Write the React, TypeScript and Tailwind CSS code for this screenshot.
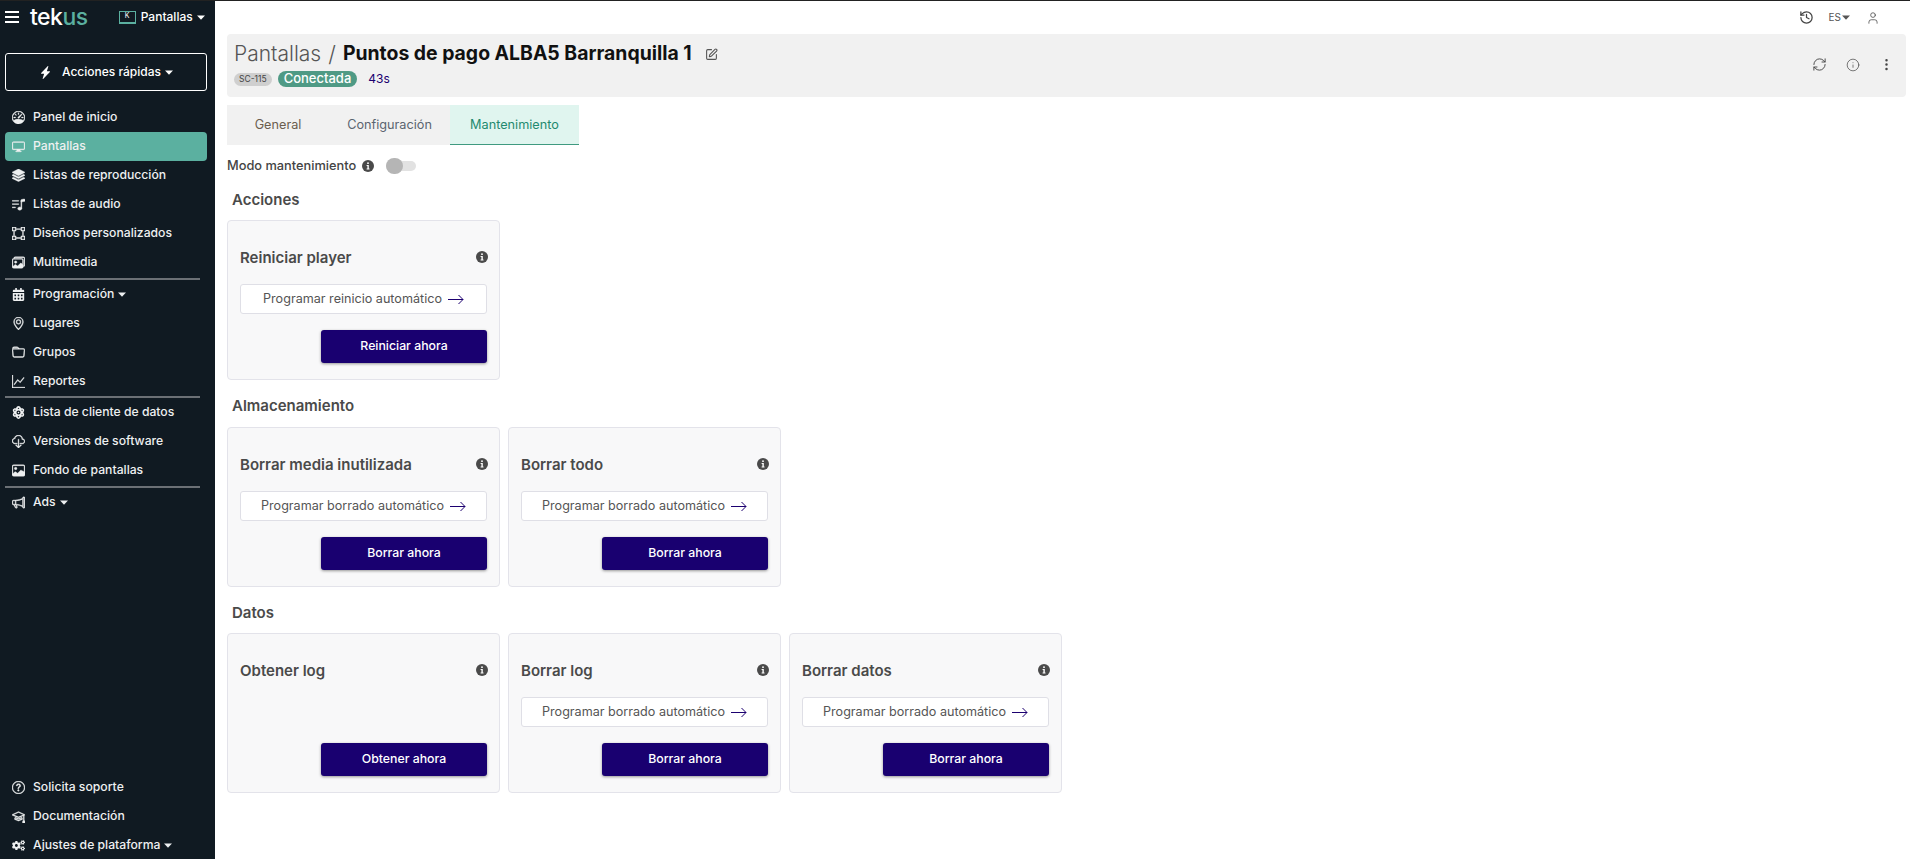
import React from "react";
import { SquarePen, RefreshCw, Info, EllipsisVertical, History, User } from "lucide-react";
import { BsSpeedometer, BsDisplay, BsStack, BsMusicNoteList, BsBoundingBox, BsImages, BsGeoAlt, BsFolder, BsGraphUp, BsCloudDownload, BsImage, BsMegaphone, BsQuestionCircle, BsMortarboard, BsLightningChargeFill } from "react-icons/bs";
import { FaCalendarAlt, FaAtom, FaCogs } from "react-icons/fa";

const font = "font-['Inter','Liberation_Sans',sans-serif]";

const Caret = ({ cls = "ml-1" }: { cls?: string }) => (
  <svg width="8" height="5" viewBox="0 0 8 5" className={cls}><path d="M0 0.5h8L4 4.8z" fill="currentColor" /></svg>
);

const SideItem = ({ icon: I, label, caret, active }: { icon: any; label: string; caret?: boolean; active?: boolean }) => (
  <div className={`flex h-[29px] items-center rounded-[4px] pl-[7px] text-[12.2px] font-medium text-[#eef0f1] ${active ? "bg-[#5bb0a0]" : ""}`}>
    <span className="mr-[8px] flex w-[13px] shrink-0 justify-center"><I size={13} stroke="currentColor" strokeWidth={0.5} /></span>
    <span>{label}</span>
    {caret && <Caret />}
  </div>
);

const Sep = () => <div className="mr-[7px] h-[2px] bg-[#6b7075]" />;

const InfoDot = ({ size = 12 }: { size?: number }) => (
  <svg width={size} height={size} viewBox="0 0 12 12" className="shrink-0">
    <circle cx="6" cy="6" r="6" fill="#4a4a4a" />
    <rect x="5.2" y="2.4" width="1.6" height="1.6" fill="#fff" />
    <path d="M4.6 5h2.2v3.4h.7v1H4.6v-1h.8V6h-.8z" fill="#fff" />
  </svg>
);

const Arrow = () => (
  <svg width="16" height="11" viewBox="0 0 16 11" className="ml-[6px]" fill="none" stroke="#1c0070" strokeWidth="1">
    <path d="M0 5.5h15M10.5 1l4.5 4.5L10.5 10" />
  </svg>
);

const Card = ({ title, link, action }: { title: string; link?: string; action: string }) => (
  <div className="flex h-[160px] w-[273px] flex-col rounded-[4px] border border-[#e3e3ea] bg-[#f8f8f9] px-[12px] pb-[16px]">
    <div className="mt-[25px] flex h-[24px] items-center justify-between">
      <span className="text-[15px] font-semibold text-[#4a4a4a]">{title}</span>
      <span className="-mr-[1px] -mt-[3px]"><InfoDot /></span>
    </div>
    {link && (
      <div className="mt-[14px] flex h-[30px] w-full items-center justify-center rounded-[3px] border border-[#dfdfe6] bg-white text-[12.6px] text-[#555]">
        <span>{link}</span>
        <Arrow />
      </div>
    )}
    <div className="mt-auto flex justify-end">
      <button className="h-[33px] w-[166px] rounded-[3px] bg-[#190070] text-[12.3px] font-medium text-white shadow-[0_1px_3px_rgba(0,0,0,0.4)]">{action}</button>
    </div>
  </div>
);

const SectionTitle = ({ children }: { children: React.ReactNode }) => (
  <div className="ml-[5px] flex h-[24px] items-center text-[15px] font-semibold text-[#4a4a4a]">{children}</div>
);

export default function App() {
  return (
    <div className={`${font} flex h-[859px] w-[1910px] overflow-hidden border-t border-[#222] bg-white`}>
      <aside className="flex h-full w-[215px] shrink-0 flex-col bg-[#101a22] pl-[5px] pr-[8px] text-white">
        <div className="flex h-[32px] items-center">
          <svg width="14" height="12" viewBox="0 0 14 12"><path d="M0 1h14M0 6h14M0 11h14" stroke="#fff" strokeWidth="2" /></svg>
          <span className="ml-[11px] text-[23px] leading-none font-medium tracking-[-0.5px]">tek<span className="text-[#5bb0a0]">us</span></span>
          <div className="ml-[31px] flex h-[13px] w-[17px] items-center justify-center border border-b-2 border-[#5bb0a0] text-[7px]">K</div>
          <span className="ml-[5px] text-[12px] font-medium">Pantallas</span>
          <Caret />
        </div>
        <div className="mt-[20px] flex h-[38px] items-center justify-center rounded-[3px] border border-white text-[12px] font-medium">
          <BsLightningChargeFill size={13} className="mr-[10px]" />
          Acciones rápidas
          <Caret />
        </div>
        <div className="mt-[12px] flex flex-col">
          <SideItem icon={BsSpeedometer} label="Panel de inicio" />
          <SideItem icon={BsDisplay} label="Pantallas" active />
          <SideItem icon={BsStack} label="Listas de reproducción" />
          <SideItem icon={BsMusicNoteList} label="Listas de audio" />
          <SideItem icon={BsBoundingBox} label="Diseños personalizados" />
          <SideItem icon={BsImages} label="Multimedia" />
          <div className="mt-[1px]"><Sep /></div>
          <SideItem icon={FaCalendarAlt} label="Programación" caret />
          <SideItem icon={BsGeoAlt} label="Lugares" />
          <SideItem icon={BsFolder} label="Grupos" />
          <SideItem icon={BsGraphUp} label="Reportes" />
          <Sep />
          <SideItem icon={FaAtom} label="Lista de cliente de datos" />
          <SideItem icon={BsCloudDownload} label="Versiones de software" />
          <SideItem icon={BsImage} label="Fondo de pantallas" />
          <div className="mt-[1px]"><Sep /></div>
          <SideItem icon={BsMegaphone} label="Ads" caret />
        </div>
        <div className="mt-auto -mb-[1px] flex flex-col">
          <SideItem icon={BsQuestionCircle} label="Solicita soporte" />
          <SideItem icon={BsMortarboard} label="Documentación" />
          <SideItem icon={FaCogs} label="Ajustes de plataforma" caret />
        </div>
      </aside>
      <main className="min-w-0 flex-1 pl-[12px] pr-[4px]">
        <div className="flex h-[33px] items-center justify-end pr-[26px] text-[#444]">
          <History size={15} />
          <span className="ml-[15px] flex items-center text-[10px] text-[#555]">ES<Caret cls="ml-[1px]" /></span>
          <User size={14} strokeWidth={1.3} className="ml-[16px]" />
        </div>
        <div className="flex h-[63px] items-start justify-between rounded-[4px] bg-[#f1f1f1] pl-[7px] pr-[12px]">
          <div>
            <div className="mt-[8px] flex h-[24px] items-center">
              <span className="text-[21px] font-light text-[#555]">Pantallas</span>
              <span className="mx-[7px] text-[22px] font-light text-[#555]">/</span>
              <span className="text-[19.4px] font-bold text-[#111]">Puntos de pago ALBA5 Barranquilla 1</span>
              <SquarePen size={13} className="ml-[13px] text-[#555]" />
            </div>
            <div className="mt-[4px] flex items-center">
              <span className="flex h-[13px] items-center rounded-full bg-[#cfcfcf] px-[5px] text-[8.5px] text-[#444]">SC-115</span>
              <span className="ml-[6px] flex h-[16px] items-center rounded-full bg-[#4f9a85] px-[6px] text-[13px] font-medium text-white">Conectada</span>
              <span className="ml-[11px] text-[12px] text-[#1c0070]">43s</span>
            </div>
          </div>
          <div className="mt-[23px] flex items-center gap-[19px] text-[#444]">
            <RefreshCw size={15} strokeWidth={1.5} />
            <Info size={14} strokeWidth={1.2} />
            <EllipsisVertical size={15} />
          </div>
        </div>
        <div className="mt-[8px] flex h-[40px] w-[352px] bg-[#f1f1f1] text-[12.7px] text-[#666]">
          <div className="flex w-[102px] items-center justify-center text-[#6b5e4f]">General</div>
          <div className="flex w-[121px] items-center justify-center text-[#5b6570]">Configuración</div>
          <div className="flex w-[129px] items-center justify-center border-b border-[#3f9a80] bg-[#e0f5ef] text-[#1f8a70]">Mantenimiento</div>
        </div>
        <div className="mt-[11px] flex h-[20px] items-center text-[12.8px] font-medium text-[#444]">
          Modo mantenimiento
          <span className="ml-[6px]"><InfoDot /></span>
          <span className="relative ml-[12px] h-[10px] w-[30px] rounded-full bg-[#e2e2e2]">
            <span className="absolute -top-[3px] left-0 h-[16px] w-[17px] rounded-full bg-[#b5b5b5]" />
          </span>
        </div>
        <div className="mt-[12px]"><SectionTitle>Acciones</SectionTitle></div>
        <div className="mt-[8px] flex gap-[8px]">
          <Card title="Reiniciar player" link="Programar reinicio automático" action="Reiniciar ahora" />
        </div>
        <div className="mt-[14px]"><SectionTitle>Almacenamiento</SectionTitle></div>
        <div className="mt-[9px] flex gap-[8px]">
          <Card title="Borrar media inutilizada" link="Programar borrado automático" action="Borrar ahora" />
          <Card title="Borrar todo" link="Programar borrado automático" action="Borrar ahora" />
        </div>
        <div className="mt-[14px]"><SectionTitle>Datos</SectionTitle></div>
        <div className="mt-[8px] flex gap-[8px]">
          <Card title="Obtener log" action="Obtener ahora" />
          <Card title="Borrar log" link="Programar borrado automático" action="Borrar ahora" />
          <Card title="Borrar datos" link="Programar borrado automático" action="Borrar ahora" />
        </div>
      </main>
    </div>
  );
}
